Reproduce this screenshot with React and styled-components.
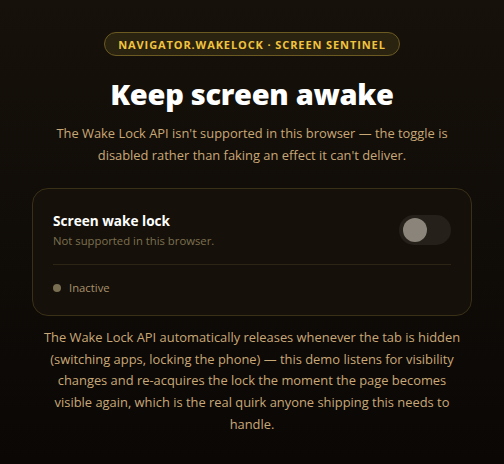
import React from "react";
import styled, { createGlobalStyle } from "styled-components";

const Global = createGlobalStyle`
  html, body { margin: 0; padding: 0; }
  body {
    background: linear-gradient(180deg, #16110a 0%, #0f0b07 60%, #0a0705 100%);
    min-height: 464px;
    font-family: "Open Sans", "Noto Sans", sans-serif;
    color: #c9a877;
  }
`;

const Page = styled.main`
  width: 504px;
  min-height: 464px;
  box-sizing: border-box;
  padding: 32px 32px 0;
  display: flex;
  flex-direction: column;
  align-items: center;
`;

const Badge = styled.div`
  height: 24px;
  box-sizing: border-box;
  padding: 0 13px;
  border: 1px solid #6b5a22;
  border-radius: 999px;
  background: #2a230f;
  color: #f2c33f;
  font-size: 11px;
  font-weight: 700;
  letter-spacing: 0.9px;
  display: flex;
  align-items: center;
`;

const Title = styled.h1`
  margin: 18px 0 0;
  color: #ffffff;
  font-size: 29px;
  font-weight: 800;
  line-height: 40px;
  letter-spacing: -0.3px;
`;

const Lead = styled.p`
  margin: 8px 0 0;
  text-align: center;
  font-size: 12.9px;
  line-height: 22px;
  color: #c9a877;
`;

const Card = styled.section`
  margin-top: 22px;
  width: 440px;
  box-sizing: border-box;
  border: 1px solid #3a3018;
  border-radius: 16px;
  background: #15110a;
  padding: 22px 20px 20px;
`;

const Row = styled.div`
  display: flex;
  align-items: center;
  justify-content: space-between;
  padding-bottom: 15px;
  border-bottom: 1px solid #2c2516;
`;

const Label = styled.div`
  display: flex;
  flex-direction: column;
  gap: 2px;
`;

const CardTitle = styled.div`
  color: #ffffff;
  font-size: 13.6px;
  font-weight: 700;
  line-height: 20px;
`;

const CardSub = styled.div`
  color: #7d7050;
  font-size: 11.3px;
  line-height: 16px;
`;

const Switch = styled.button`
  width: 52px;
  height: 30px;
  border: none;
  border-radius: 999px;
  background: #25201a;
  padding: 0 0 0 4px;
  display: flex;
  align-items: center;
  cursor: not-allowed;
`;

const Knob = styled.span`
  width: 24px;
  height: 24px;
  border-radius: 50%;
  background: #8a847a;
`;

const Status = styled.div`
  display: flex;
  align-items: center;
  gap: 8px;
  padding-top: 15px;
  font-size: 11.3px;
  color: #a8906a;
`;

const Dot = styled.span`
  width: 8px;
  height: 8px;
  border-radius: 50%;
  background: #7a6e50;
`;

const Note = styled.p`
  margin: 11px 0 0;
  width: 440px;
  text-align: center;
  font-size: 12.9px;
  line-height: 21.7px;
  color: #c9a877;
`;

export default function App() {
  return (
    <>
      <Global />
      <Page>
        <Badge>NAVIGATOR.WAKELOCK · SCREEN SENTINEL</Badge>
        <Title>Keep screen awake</Title>
        <Lead>
          The Wake Lock API isn't supported in this browser — the toggle is
          <br />
          disabled rather than faking an effect it can't deliver.
        </Lead>
        <Card>
          <Row>
            <Label>
              <CardTitle>Screen wake lock</CardTitle>
              <CardSub>Not supported in this browser.</CardSub>
            </Label>
            <Switch disabled aria-label="Screen wake lock">
              <Knob />
            </Switch>
          </Row>
          <Status>
            <Dot />
            Inactive
          </Status>
        </Card>
        <Note>
          The Wake Lock API automatically releases whenever the tab is hidden
          <br />
          (switching apps, locking the phone) — this demo listens for visibility
          <br />
          changes and re-acquires the lock the moment the page becomes
          <br />
          visible again, which is the real quirk anyone shipping this needs to
          <br />
          handle.
        </Note>
      </Page>
    </>
  );
}
